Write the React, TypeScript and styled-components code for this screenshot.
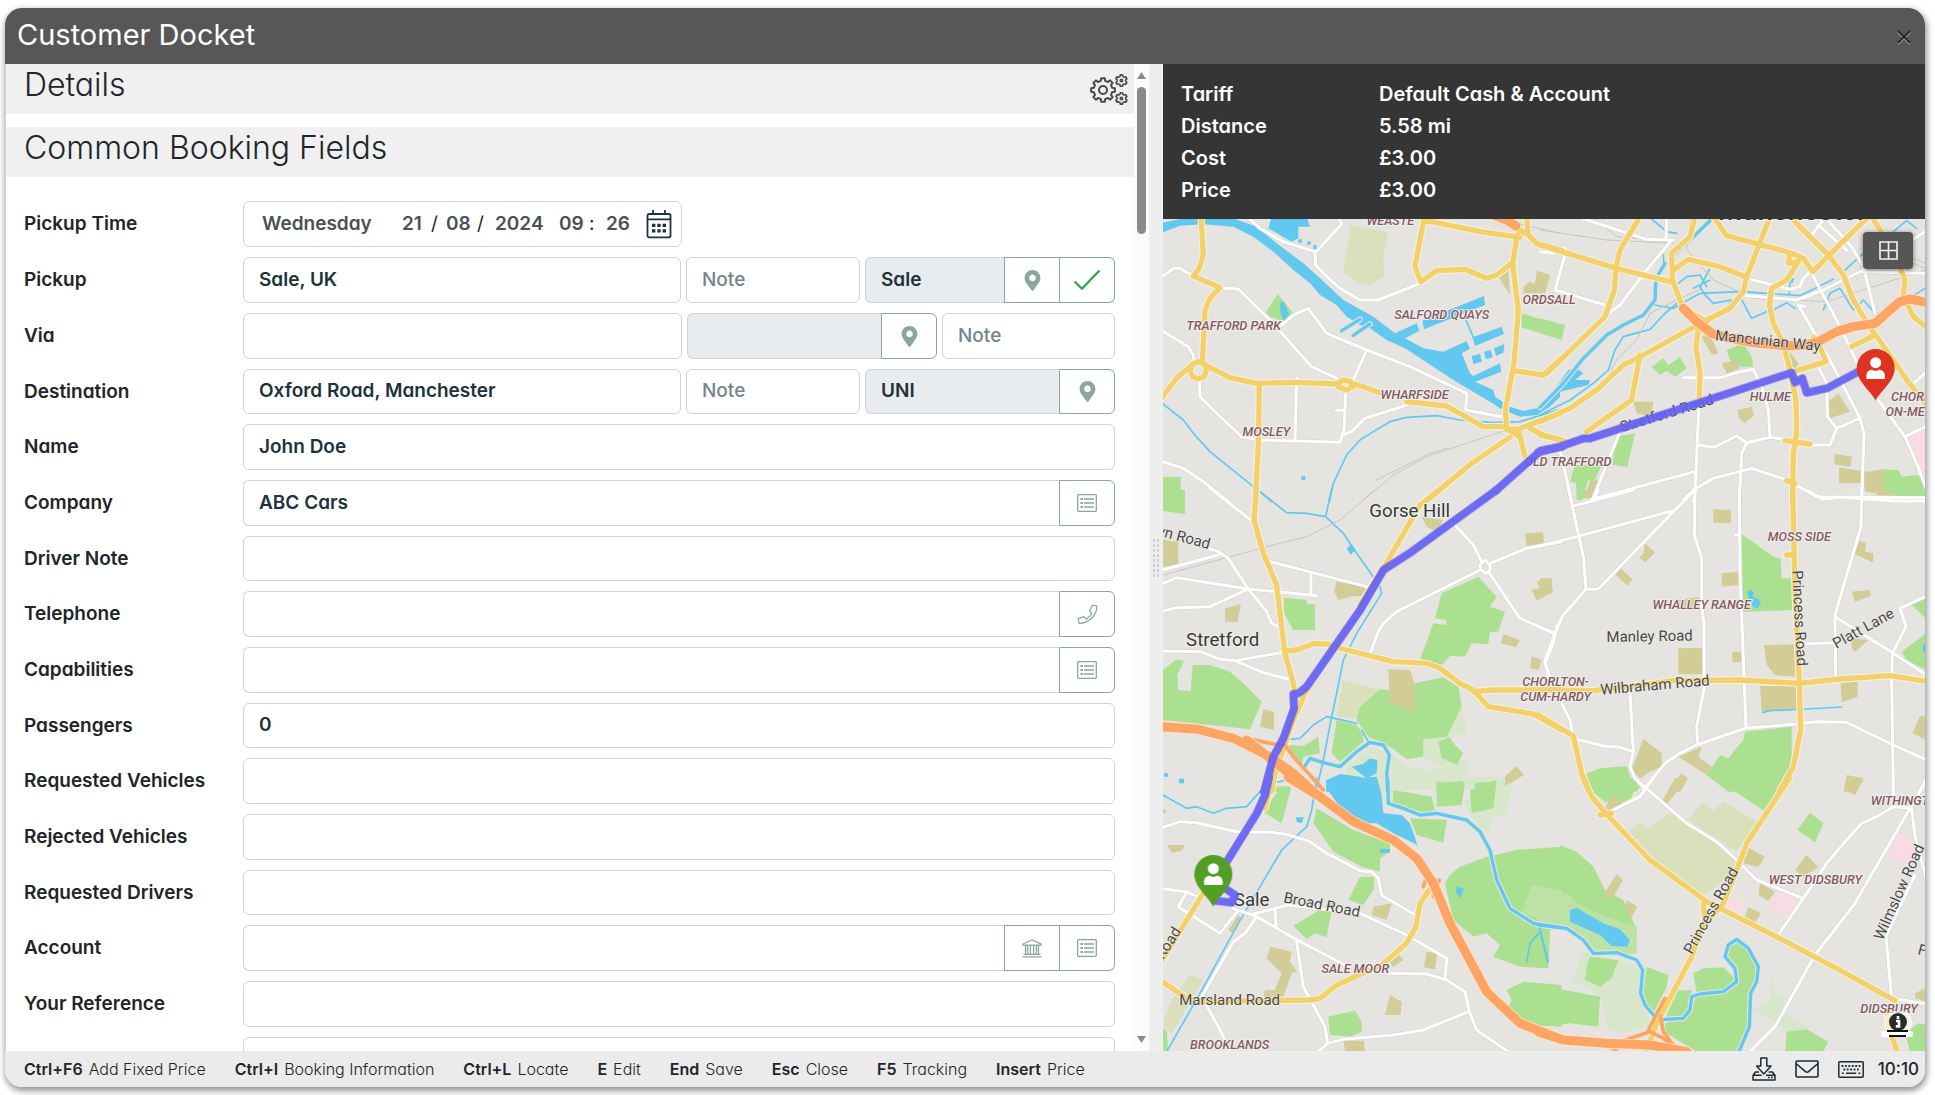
import React from "react";
import styled, { createGlobalStyle } from "styled-components";
import { FaMapMarkerAlt } from "react-icons/fa";

const FONT = `Inter, "Open Sans", "Liberation Sans", sans-serif`;

const GlobalStyle = createGlobalStyle`
  *, *::before, *::after { box-sizing: border-box; }
  body {
    margin: 0;
    background: #fff;
    color: #212529;
    font-family: ${FONT};
    font-feature-settings: "cv11";
    font-size: 19px;
  }
  input, button { font: inherit; font-feature-settings: inherit; color: inherit; }
`;

/* ---------- window frame ---------- */

const Desktop = styled.main`
  height: 100vh;
  padding: 8px 10px 8px 5px;
`;

const Window = styled.section`
  height: 100%;
  display: grid;
  grid-template-rows: 56px minmax(0, 1fr) 36px;
  border-radius: 17px;
  overflow: hidden;
  background: #fff;
  box-shadow: 1px 3px 6px 1px rgba(0, 0, 0, 0.42);
`;

const TitleBar = styled.header`
  display: flex;
  align-items: center;
  justify-content: space-between;
  padding: 0 13px 2px 12px;
  background: #575757;
  color: #fff;
`;

const Title = styled.h1`
  margin: 0;
  font-size: 29px;
  line-height: 36px;
  font-weight: 400;
`;

const CloseButton = styled.button`
  display: grid;
  place-items: center;
  width: 16px;
  height: 16px;
  margin-top: 4px;
  padding: 0;
  border: 0;
  background: none;
  color: #262626;
  filter: drop-shadow(0 1px 0 #bdbdbd);
`;

const Body = styled.div`
  display: grid;
  grid-template-columns: minmax(0, 1144fr) 14px minmax(0, 762fr);
  min-height: 0;
`;

/* ---------- form pane ---------- */

const FormPane = styled.div`
  display: grid;
  grid-template-columns: minmax(0, 1fr) 15px;
  min-height: 0;
  border-left: 1px solid #d0d0d0;
`;

const FormScroll = styled.div`
  overflow: hidden;
  min-height: 0;
`;

const Band = styled.div`
  display: flex;
  justify-content: space-between;
  align-items: flex-start;
  height: 50px;
  margin-bottom: 13px;
  padding: 0 6px 0 18px;
  background: #f0f0f0;
`;

const BandTitle = styled.h2`
  margin: 0;
  font-size: 32px;
  line-height: 42px;
  font-weight: 300;
`;

const GearButton = styled.button`
  margin-top: 9px;
  padding: 0;
  border: 0;
  background: none;
  color: #4b4b4b;
  line-height: 0;
`;

const Fields = styled.form`
  display: grid;
  gap: 10px;
  padding: 11px 19px 0 18px;
`;

const Row = styled.div`
  display: grid;
  grid-template-columns: 219px minmax(0, 1fr);
  height: 46px;
  &:nth-child(3n + 4) {
    height: 45px;
  }
`;

const Label = styled.label`
  align-self: center;
  line-height: 24px;
  font-weight: 600;
`;

const Controls = styled.div`
  display: flex;
  gap: 5px;
  min-width: 0;
`;

const Group = styled.div<{ $grow: number }>`
  display: flex;
  flex: ${(p) => p.$grow} 1 0;
  min-width: 0;
`;

const TextBox = styled.input<{ $joined?: boolean }>`
  flex: 1 1 0;
  min-width: 0;
  height: 100%;
  padding: 0 15px 2px;
  border: 1px solid #ced4da;
  border-right-width: ${(p) => (p.$joined ? "0" : "1px")};
  border-radius: ${(p) => (p.$joined ? "6px 0 0 6px" : "6px")};
  background: #fff;
  color: #1d333b;
  font-weight: 600;
  outline: none;
  &::placeholder {
    color: #75838a;
    font-weight: 500;
    opacity: 1;
  }
  &:read-only {
    background: #e9ecef;
  }
`;

const AddOn = styled.button`
  display: grid;
  place-items: center;
  flex: none;
  width: 56px;
  padding: 0;
  border: 1px solid #8ba79b;
  background: #fff;
  color: #8ba79b;
  & + & {
    width: 55px;
    border-left: 0;
  }
  &:last-child {
    border-radius: 0 6px 6px 0;
  }
`;

const DateBox = styled.div`
  display: flex;
  align-items: center;
  width: 439px;
  padding-left: 18px;
  border: 1px solid #ced4da;
  border-radius: 6px;
`;

const DatePart = styled.input<{ $w: number }>`
  width: ${(p) => p.$w}px;
  padding: 0 0 2px;
  border: 0;
  background: none;
  color: #495057;
  font-weight: 600;
  outline: none;
`;

const Separator = styled.span<{ $w: number }>`
  width: ${(p) => p.$w}px;
  padding-bottom: 2px;
`;

const CalendarButton = styled.button`
  padding: 0;
  border: 0;
  background: none;
  color: #1d333b;
  line-height: 0;
`;

const ScrollTrack = styled.div`
  display: flex;
  flex-direction: column;
  align-items: center;
  padding: 8px 0;
  background: #fcfcfc;
  color: #8a8a8a;
  line-height: 0;
`;

const ScrollThumb = styled.div`
  width: 9px;
  height: 147px;
  margin: 8px 0 auto;
  border-radius: 5px;
  background: #8a8a8a;
`;

const Splitter = styled.div`
  display: grid;
  grid-template-columns: 2px 2px;
  grid-auto-rows: 3px;
  gap: 2px;
  place-content: center;
  background: #eee;
  span {
    background: #cfcfcf;
  }
`;

/* ---------- price and map pane ---------- */

const SidePane = styled.aside`
  display: grid;
  grid-template-rows: auto minmax(0, 1fr);
  min-height: 0;
`;

const Summary = styled.dl`
  display: grid;
  grid-template-columns: 198px 1fr;
  margin: 0;
  padding: 14px 18px 13px;
  background: #353535;
  color: #fff;
  font-size: 20px;
  line-height: 32px;
  font-weight: 600;
  dd {
    margin: 0;
  }
`;

const MapArea = styled.div`
  position: relative;
  min-height: 0;
  overflow: hidden;
  background: #e5e4e0;
`;

const MapSvg = styled.svg`
  display: block;
  width: 100%;
  height: 100%;
  font-family: Roboto, "Liberation Sans", sans-serif;
  text {
    paint-order: stroke;
    stroke: #f1f0ee;
    stroke-width: 6px;
    stroke-linejoin: round;
    text-anchor: middle;
  }
  .area {
    font-size: 38px;
    font-style: italic;
    font-weight: 500;
    fill: #84595f;
  }
  .city {
    font-size: 84px;
    font-weight: 500;
    fill: #333333;
  }
  .town {
    font-size: 56px;
    fill: #383838;
  }
  .road {
    font-size: 45px;
    fill: #484848;
    stroke-width: 3px;
  }
`;

const MapButton = styled.button`
  position: absolute;
  top: 13px;
  right: 12px;
  display: grid;
  place-items: center;
  width: 50px;
  height: 37px;
  padding: 0;
  border: 0;
  border-radius: 4px;
  background: #565656;
  color: #f4f3ec;
  box-shadow: 0 1px 5px rgba(0, 0, 0, 0.5);
`;

const MapInfo = styled.button`
  position: absolute;
  right: 12px;
  bottom: 12px;
  padding: 0;
  border: 0;
  background: none;
  line-height: 0;
`;

/* ---------- status bar ---------- */

const StatusBar = styled.footer`
  display: flex;
  align-items: center;
  justify-content: space-between;
  padding: 0 6px 0 19px;
  background: #ebebeb;
  font-size: 16px;
`;

const Shortcuts = styled.div`
  display: flex;
  gap: 29px;
`;

const Shortcut = styled.button`
  display: flex;
  gap: 6px;
  padding: 0;
  border: 0;
  background: none;
  line-height: 20px;
  font-weight: 300;
  kbd {
    font: inherit;
    font-weight: 600;
  }
`;

const Tray = styled.div`
  display: flex;
  align-items: center;
  gap: 19px;
  line-height: 0;
  button {
    padding: 0;
    border: 0;
    background: none;
    line-height: 0;
  }
  time {
    font-size: 17px;
    line-height: 20px;
    font-weight: 500;
    margin-left: -5px;
  }
`;

/* ---------- icons ---------- */

function gear(cx: number, cy: number, outer: number, inner: number, teeth: number) {
  const pts: string[] = [];
  const step = (Math.PI * 2) / teeth;
  for (let i = 0; i < teeth; i++) {
    const a = i * step - Math.PI / 2;
    [
      [-0.3, inner],
      [-0.19, outer],
      [0.19, outer],
      [0.3, inner],
    ].forEach(([o, r]) => {
      pts.push(`${(cx + Math.cos(a + o * step) * r).toFixed(2)} ${(cy + Math.sin(a + o * step) * r).toFixed(2)}`);
    });
  }
  return `M${pts.join("L")}Z`;
}

const GearsIcon = () => (
  <svg width="38" height="33" viewBox="0 0 38 33" fill="none" stroke="currentColor" strokeWidth="2" strokeLinejoin="round">
    <path d={gear(13, 17, 12, 9.4, 8)} />
    <circle cx="13" cy="17" r="4" />
    <g strokeWidth="1.6">
      <path d={gear(31.4, 7.6, 5.8, 4.4, 6)} />
      <path d={gear(31.4, 25.4, 5.8, 4.4, 6)} />
      <circle cx="31.4" cy="7.6" r="1.2" />
      <circle cx="31.4" cy="25.4" r="1.2" />
    </g>
  </svg>
);

const CalendarIcon = () => (
  <svg width="26" height="30" viewBox="0 0 26 30" fill="none" stroke="currentColor" strokeWidth="1.8">
    <rect x="1.5" y="5" width="23" height="23.4" rx="1.6" />
    <path d="M1.5 10.4H24.5M7 1V5M19 1V5" />
    <path d="M6 16.3H20M6 21.8H20" strokeWidth="3.2" strokeDasharray="3.4 1.9" />
  </svg>
);

const CheckIcon = () => (
  <svg width="28" height="22" viewBox="0 0 28 22" fill="none" stroke="#28a745" strokeWidth="2.2">
    <path d="M1.5 12.5L9 19.8L26.5 1.5" />
  </svg>
);

const ListIcon = () => (
  <svg width="20" height="18" viewBox="0 0 20 18" fill="none" stroke="currentColor" strokeWidth="1.3">
    <rect x="0.7" y="0.7" width="18.6" height="16.6" rx="0.8" />
    <path d="M7 5H17M7 9H17M7 13H17" />
    <path d="M3.5 5H6M3.5 9H6M3.5 13H6" strokeWidth="2.2" />
  </svg>
);

const PhoneIcon = () => (
  <svg width="21" height="21" viewBox="-1 -1 22 22" fill="none" stroke="currentColor" strokeWidth="1.3" strokeLinejoin="round">
    <path d="M15 .3L19.8 1C20 11 11 19.4 1.2 19.2L.3 14.4L6.3 12.3L8.6 14.8C11.4 13.4 13.4 11.4 14.6 8.6L12.2 6.3Z" />
  </svg>
);

const BankIcon = () => (
  <svg width="20" height="19" viewBox="0 0 20 19" fill="none" stroke="currentColor" strokeWidth="1.3">
    <path d="M1 5L10 .9L19 5V6.2H1ZM3.5 6.5V15M5.6 6.5V15M8.4 6.5V15M11.6 6.5V15M14.4 6.5V15M16.5 6.5V15M1.6 15.4H18.4M.4 17.8H19.6" />
  </svg>
);

const PinIcon = () => <FaMapMarkerAlt size={21} />;

/* ---------- map data ---------- */

interface Sheet {
  at: [number, number];
  pale?: string[];
  moss?: string[];
  green?: string[];
  glade?: string[];
  sand?: string[];
  pink?: string[];
  water?: string[];
  river?: string[];
  stream?: string[];
  rail?: string[];
  white?: string[];
  yellow?: string[];
  slip?: string[];
  orange?: string[];
  route?: string[];
}

const SHEETS: Sheet[] = [
  {
    at: [-9, -57],
    moss: ["573,75 683,97 670,175 672,230 630,255 600,253 550,215"],
    green: [
      "353,282 400,340 375,365 312,345",
      "1085,340 1200,375 1200,418 1085,382",
      "9,832 62,830 62,870 75,880 75,900 9,900",
    ],
    sand: ["1130,212 1170,225 1155,280 1090,280 1090,260 1108,245 1125,250", "1045,210 1015,230 1050,285"],
    water: [
      "0,70 60,57 225,57 290,80 350,130 430,190 480,235 550,300 640,350 705,400 770,370 778,392 735,415 790,445 850,455 920,423 930,447 905,460 930,520 940,528 1020,490 1024,515 945,545 1000,570 1005,590 1050,620 1090,633 1130,625 1165,590 1200,545 1200,590 1170,620 1130,645 1080,650 1020,625 990,605 880,540 735,445 680,420 630,385 600,375 560,350 530,315 480,285 450,250 400,210 340,155 280,110 220,80 130,73 60,77 0,100",
      "787,362 972,288 975,315 792,388",
      "938,412 1025,380 1032,402 945,438",
      "935,468 960,462 966,485 940,492",
      "972,455 992,450 998,472 978,478",
      "1002,445 1033,432 1030,458 1008,468",
      "335,50 440,50 450,80 415,80 415,115 395,125 325,85",
      "360,308 372,305 388,345 370,362 362,340",
      "415,118 426,118 426,128 415,128",
      "442,124 452,124 452,134 442,134",
      "460,136 470,136 470,147 460,147",
      "424,829 436,829 436,840 424,840",
    ],
    river: ["545,392 600,358", "580,406 630,372"],
    stream: [
      "918,360 940,412",
      "9,612 70,660 100,700 150,755 280,860",
      "300,875 335,905",
      "508,905 520,850 560,765 600,720 640,695 690,665 740,652 830,647 900,660 1000,668 1080,665 1200,628",
    ],
    rail: ["610,900 700,825 800,770 1040,690", "650,840 810,760 860,745", "1080,72 1200,100"],
    white: [
      "262,50 300,85 370,125 465,155 467,195 490,220 540,265 600,300 655,300 780,250",
      "465,160 545,72 535,50",
      "0,235 40,205 60,205 100,228",
      "195,265 235,267 335,365 455,500 530,535",
      "360,380 400,345 445,325 500,400 620,450 750,500 920,580 917,630 1025,650",
      "620,450 580,540",
      "0,388 85,440 100,465 102,490",
      "118,540 120,590 175,645 245,710 300,720 540,727",
      "410,535 405,720",
      "557,580 552,690 540,727",
      "528,631 552,631",
      "555,703 575,695 615,655 740,615",
      "0,783 70,805 130,845 205,905",
    ],
    yellow: [
      "123,50 130,165 118,205 100,228 180,263 150,295 135,330 127,490",
      "90,510 98,530 115,536 132,530 140,510 132,492 115,485 98,492 90,510",
      "0,600 50,535 95,495",
      "135,495 210,533 290,550 405,547 530,552 550,540 572,545 578,560 560,570 535,560",
      "575,550 610,560 670,582",
      "740,605 860,618 925,655 970,680 1040,680",
      "298,555 295,740 286,905",
      "790,60 960,95 1080,112",
      "790,65 765,200 783,245 830,212 915,208 980,235 1010,225 1055,190",
      "1072,105 1058,190 1075,330 1062,490 1036,630 1040,685 1080,710",
      "1060,512 1150,525 1205,475",
      "1100,50 1105,105 1070,85",
      "1105,105 1130,130 1205,152",
      "1040,690 1080,685 1200,640",
      "795,905 935,790 1050,712",
      "1078,700 1095,770",
      "1110,685 1150,705 1205,720",
    ],
    orange: ["1000,45 1040,60 1068,78"],
    route: ["1008,871 1142,752 1205,740"],
  },
  {
    at: [1131, -57],
    green: [
      "0,355 75,375 65,420 0,400",
      "335,500 370,475 385,495 420,470 440,505 405,530 380,512 360,525",
      "560,450 610,430 635,470 640,500 605,500 570,480",
      "225,710 285,700 262,800 218,795",
      "105,795 185,795 160,850 145,840 125,900 110,900 108,850 90,845",
      "1025,808 1075,810 1085,830 1130,825 1155,840 1155,900 1060,900 1050,880 1025,870",
    ],
    sand: [
      "0,215 30,225 15,280 0,278",
      "485,410 510,402 535,460 515,465",
      "545,490 590,480 600,505 560,520",
      "745,450 775,490 770,505 750,500",
      "280,605 340,605 335,650 290,640",
      "593,630 635,620 642,645 615,670 597,655",
      "865,605 895,580 930,635 870,655",
      "885,762 937,770 930,800 882,793",
      "897,803 985,815 1028,808 1028,870 1055,875 1055,900 1015,900 1010,880 975,875 972,850 897,850",
      "150,845 175,840 155,895 130,895",
    ],
    pink: ["1100,710 1160,680 1160,870 1135,800"],
    water: ["85,510 110,505 130,520 105,540 150,540 145,555 60,575 50,560", "750,232 762,235 758,250 748,246"],
    river: ["0,622 70,550 130,475 200,405 250,375 310,345 345,300 348,235 375,190", "400,165 450,120 515,57"],
    stream: [
      "0,645 90,600 160,550 205,510 225,450 250,410 330,388 370,345 410,310",
      "345,315 400,325 480,280 600,275 650,278 780,287 880,238",
      "415,250 440,230 480,225 500,260",
      "508,208 480,262 500,290 520,310 575,300 560,325",
      "460,265 510,240",
      "370,165 372,200",
      "600,290 635,355 680,335",
      "700,330 740,308 765,325",
      "750,235 748,285",
      "850,330 870,280 900,265 940,330 970,300 1010,345",
      "910,215 970,160",
      "335,57 380,95 410,100",
      "1060,95 1100,62 1130,85",
      "1115,290 1155,265",
    ],
    rail: [
      "0,90 200,120 400,130",
      "450,57 440,150 520,240 640,295 860,305 1155,210",
      "180,70 230,110 360,120",
      "480,268 410,300 330,340 290,420 230,480 200,540",
      "1060,150 1155,190",
      "1060,165 1155,205",
    ],
    white: [
      "110,50 320,118 400,120",
      "380,50 378,115",
      "0,155 35,160 75,145 75,165 45,270 195,315",
      "200,345 240,315 320,210 395,120",
      "620,235 750,268 780,260 790,235 815,212",
      "600,285 770,300 850,270 1000,195 1155,95",
      "815,105 850,60",
      "840,80 920,150",
      "860,57 935,140 970,200 1005,340",
      "795,320 775,315 870,480",
      "815,220 900,380 985,560 1095,710 1130,790 1160,870",
      "870,480 960,655 972,700 965,905",
      "430,533 540,533 600,515 640,508 665,560 685,630 690,710",
      "478,590 465,880 460,905",
      "478,735 520,742 590,708 620,728 690,712 735,718",
      "620,728 605,760 598,905",
      "835,500 860,550 862,650 890,685 870,735 815,735",
      "890,685 960,655",
      "1095,710 1160,678",
      "1115,555 1160,515",
      "240,695 155,905",
      "155,898 465,815",
      "60,750 95,905",
      "430,900 460,870 520,835 635,805 740,840 830,890 1155,893",
      "965,215 1155,220",
    ],
    yellow: [
      "0,135 230,205 390,245",
      "300,50 240,150 228,205 223,270 195,350 20,520 0,525",
      "465,50 450,110 395,160 397,240 430,325 500,365",
      "400,210 445,178 540,200 620,232",
      "520,50 560,107 750,158 790,175 818,215 865,168 985,50",
      "690,50 620,230 610,275 570,325 500,360 310,465 250,495 170,570 90,625 0,665",
      "750,50 865,165 910,225 940,300 985,375",
      "995,50 1055,145 1095,240 1090,290 1120,350 1160,382",
      "750,160 745,190 775,185 740,240 695,265 688,315 700,370 725,420 745,490 768,600 770,700 760,760 758,905",
      "770,512 858,485 840,440 820,412",
      "985,375 1060,480 1100,540 1160,615",
      "935,440 1005,405",
      "300,465 275,600 140,695",
      "475,385 468,440 480,520 478,590",
      "0,705 80,725",
      "735,722 810,732",
      "740,842 765,850",
    ],
    orange: ["430,325 470,365 515,400 560,412 640,428 740,437 800,435 835,425 890,395 940,380 1005,370 1050,330 1080,305 1110,297 1160,307"],
    route: ["-5,757 60,740 130,715 150,715 755,518 765,547 787,535 800,578 860,565 955,515"],
  },
  {
    at: [-9, 813],
    pale: [
      "560,830 640,770 690,790 680,900 560,900",
      "690,790 740,830 800,840 900,830 920,862 1040,860 1040,880 900,900 700,900",
      "790,748 905,650 915,700 920,730 870,740 880,800 925,820 925,850 840,830 790,800",
    ],
    moss: ["548,570 660,600 590,685 530,680"],
    green: [
      "9,0 75,0 75,72 45,68 9,62",
      "372,323 440,330 440,343 465,343 465,420 400,420 372,370",
      "845,310 955,260 1010,320 990,350 1035,365 1015,425 990,425 985,462 935,460 915,500 870,497 845,525 780,508 820,400 860,405 858,390 825,385",
      "9,540 50,508 72,512 52,555 55,600 92,603 98,525 150,525 210,545 250,580 305,635 270,718 200,710 9,690",
      "765,580 850,562 895,590 905,650 860,740 790,748 790,800 740,808 690,770 625,740 590,690 600,650 660,598 690,600 765,660",
      "530,690 590,705 610,735 610,755 540,815 515,790",
      "385,765 430,768 475,740 480,790 430,800 425,830 410,820",
      "835,755 870,742 885,765 910,790 890,825 845,805",
      "830,880 910,872 910,905 830,905",
      "945,878 1000,875 1000,905 945,905",
      "345,890 390,890 390,905 345,905",
    ],
    sand: [
      "9,150 55,155 55,225 9,230",
      "530,275 625,290 620,320 580,318 535,330 522,305",
      "685,538 750,540 765,585 765,665 690,640",
      "785,80 850,90 830,125 800,110",
      "1095,130 1148,127 1152,160 1100,170",
      "1130,275 1172,262 1178,305 1130,332 1115,300 1140,295",
      "1030,432 1080,450 1068,472 1022,460",
      "1115,498 1145,510 1135,540 1110,535",
      "195,355 243,343 232,397 195,395",
      "310,658 342,665 342,720 300,710",
      "1070,828 1092,855 1035,888 1035,860",
    ],
    water: [
      "560,175 575,162 585,180 572,195",
      "498,905 500,870 540,852 600,860 660,905",
      "575,830 610,822 630,805 652,810 650,850 620,865 600,850",
      "12,850 24,850 24,860 12,860",
      "57,866 72,866 72,880 57,880",
    ],
    river: ["430,835 450,805 490,818 540,830 590,785 630,757 670,765 688,795 680,850 683,905"],
    stream: [
      "300,5 380,68 440,70 497,80 515,-5",
      "497,80 550,130 590,190 640,260",
      "660,290 665,310 590,430 550,510 530,610 515,680 490,810 468,905",
      "390,748 420,745 460,705 500,680 590,700",
      "605,720 625,755",
      "345,878 380,870",
    ],
    rail: ["9,255 340,165 440,140 540,90 645,0"],
    white: [
      "150,-5 275,92",
      "100,160 175,185 205,205 265,297 320,365 335,400 360,412",
      "0,242 175,195 178,185",
      "0,285 50,263 265,297 470,317",
      "0,366 50,353 150,350 265,297",
      "325,213 640,295",
      "453,250 453,315",
      "0,483 120,485 180,508 225,512 370,487",
      "225,512 310,548 395,570",
      "880,100 940,165 965,215",
      "990,220 1100,175 1205,155",
      "960,240 710,365 670,400 655,425 632,487",
      "960,225 975,210 990,225 990,240 977,250 962,238 960,225",
      "985,245 1080,385 1185,430 1205,385",
      "1185,430 1155,510 1165,560",
    ],
    yellow: [
      "290,-5 282,90 310,190 350,285 375,490 400,580 405,610",
      "845,-5 780,45 670,235 600,345",
      "380,483 410,480 465,460 500,462 560,480 700,515 800,520 840,535 900,580 940,600 985,650 1120,672 1205,720",
      "940,605 1000,600 1205,600",
      "440,600 400,690 345,850 335,905",
    ],
    orange: ["0,710 115,718 220,745 330,800 400,850 460,905", "260,750 400,860"],
    slip: ["260,745 345,763 375,765 400,800 490,900"],
    route: ["1008,1 755,185 670,240 600,360 440,590 415,610 400,612 402,655 370,745 340,800 312,905"],
  },
  {
    at: [1131, 813],
    green: [
      "605,132 700,200 722,205 725,265 755,265 758,360 610,365",
      "615,725 755,710 755,800 750,820 755,825 700,905 565,905 500,855 540,795 565,805 610,750",
      "140,850 180,835 260,828 270,860 300,890 290,905 150,905",
      "1115,345 1160,318 1160,388",
      "1085,485 1160,428 1160,540 1100,510",
      "115,0 140,0 130,28",
      "1055,0 1155,0 1155,28 1060,25",
    ],
    sand: [
      "520,58 573,60 573,100 520,98",
      "545,250 595,245 595,285 545,290",
      "315,160 345,188 315,217 298,203 310,190",
      "240,233 277,268 262,287 227,255",
      "0,265 35,265 38,310 0,315",
      "415,475 487,473 487,553 415,552",
      "577,485 603,485 605,517 577,517",
      "672,465 765,463 765,560 705,555 680,525",
      "660,588 770,588 770,658 665,665",
      "902,580 953,575 953,620 905,637",
      "940,190 960,152 978,160 975,185 1000,190 1000,218",
      "935,305 990,300 992,318 945,335",
      "935,445 985,450 945,485 935,475",
      "310,747 365,790 365,830 330,845 300,865 275,840",
      "415,800 485,770 475,800 515,830 500,855",
      "425,850 445,865 420,905 388,900",
      "920,855 970,865 950,905 912,905",
      "1140,678 1160,680 1160,750 1117,730",
      "410,330 485,320 480,345 415,360",
      "0,128 10,130 10,160 0,160",
    ],
    water: [
      "622,305 632,299 642,308 638,320 655,326 663,340 652,355 638,350 634,335 625,320",
      "1148,465 1160,460 1160,490 1148,485",
    ],
    stream: ["668,668 690,662 800,657 905,651"],
    white: [
      "105,47 280,0",
      "85,-5 130,200 138,298 175,297 400,65 465,0",
      "0,168 110,140 400,62",
      "175,0 160,30",
      "465,-5 463,135 485,205 485,350 492,400 493,590 470,710 473,760",
      "598,-5 600,250 618,710",
      "586,135 600,135",
      "138,298 70,375 50,410 40,460 15,520 30,560",
      "0,412 40,430",
      "800,0 850,28 900,22 1060,33 1160,33",
      "965,-5 963,110 885,375 887,560",
      "785,462 885,458",
      "885,380 1060,490 1160,555",
      "1160,318 1080,355 1098,410 1057,490 1055,560 1060,905",
      "65,640 90,690 100,745 190,768 240,772 280,785 270,610",
      "280,785 270,830 285,865 315,895",
      "310,900 375,820 420,790 470,765 615,715 770,702 830,695 920,697 1060,765 1160,810",
      "1160,865 1138,905",
    ],
    yellow: [
      "758,-5 765,300 778,580 782,720 760,830 718,905",
      "740,195 762,195",
      "0,600 160,602 270,590 400,572 600,570 778,580 900,567 1050,557 1160,574",
      "-5,675 100,738 125,850 148,905",
    ],
  },
  {
    at: [-9, 1683],
    pale: ["910,60 1060,-10 1040,100 1000,110 985,165 940,120", "560,0 700,0 700,80 665,60"],
    moss: ["90,583 130,600 35,760 9,735 30,670"],
    green: [
      "310,95 365,17 393,25 365,130",
      "470,85 580,150 690,190 690,215 660,235 660,275 605,260 520,215 460,130",
      "600,290 643,290 640,330 610,375 565,360",
      "400,437 520,365 500,472 465,460 440,477",
      "750,115 860,120 850,188 770,165",
      "700,30 815,50 825,90 790,100 700,85",
      "830,5 915,10 905,75 830,80",
      "930,30 1010,0 1000,85 935,100",
      "855,310 870,285 900,260 980,230 1070,210 1205,200 1205,450 1170,450 1165,565 1080,560 1000,530 1020,495 980,460 940,470 880,420",
      "505,710 585,692 605,725 605,755 570,770 510,765",
      "1090,605 1205,615 1205,740 1110,735 1040,690 1055,660 1040,630",
      "0,745 20,750 25,812 0,812",
      "0,80 22,95 0,105",
    ],
    glade: ["1115,315 1205,330 1205,440 1085,400"],
    sand: [
      "20,195 75,195 65,212 35,218",
      "330,500 395,515 390,545 412,575 395,580 370,650 310,650 315,630 345,630 365,580 320,535",
      "640,380 695,370 680,420 635,405",
      "715,520 730,540 700,560 680,540",
      "800,515 832,520 825,568 792,562",
      "690,645 725,665 722,705 675,705",
      "550,782 612,782 615,815 555,815",
      "235,405 242,415 215,460 205,450",
    ],
    water: [
      "498,0 650,-10 665,45 670,100 725,105 750,130 772,195 700,160 650,130 610,130 545,90 500,25",
      "890,320 912,325 900,355 888,335",
      "660,207 690,207 690,218 660,218",
      "408,112 432,112 425,130 410,125",
    ],
    river: ["683,-5 685,70 730,85 780,105 830,100 920,120 960,155 990,210 1010,300 1050,385 1120,430 1205,443"],
    stream: [
      "0,40 80,85 110,80 160,100 200,85 260,80 300,35 345,5",
      "470,-5 455,90 440,140 365,210 300,320 235,430 120,640 20,815",
      "1100,545 1110,490 1140,455 1165,545",
    ],
    white: [
      "0,145 60,125 110,128 230,155 330,157 380,163 450,185 500,220 530,235 600,272 635,275 655,295 665,345 765,405",
      "0,325 75,335 130,355",
      "80,335 55,380 180,460 235,390",
      "220,385 290,410 420,485 555,555",
      "280,402 385,375 600,400 740,465 860,535 855,600",
      "345,385 348,440",
      "290,410 255,460 220,485 125,650 180,750 210,815",
      "410,485 430,620 495,740 503,790 475,815",
      "503,790 550,778 700,765 790,750 925,695",
      "680,580 800,582 860,600 915,635 928,695 950,750 1045,815",
    ],
    yellow: [
      "337,-5 315,85",
      "130,340 0,550",
      "0,600 80,655 130,665 450,660 480,655 530,615 665,555 740,490 768,440 780,370 800,340 830,305",
    ],
    orange: ["385,-8 480,50 580,125 700,180 770,235 820,310 870,430 980,635 1080,730 1205,778"],
    slip: ["790,320 800,290", "820,350 838,300"],
    route: ["327,-8 315,45 290,100 200,245", "190,322 225,345 215,368 165,362"],
  },
  {
    at: [1131, 1683],
    pale: ["130,515 220,540 300,560 330,740 240,760 200,740 180,650 95,600", "640,685 690,660 690,590 710,640 800,660 740,650 720,690 810,745 740,755"],
    moss: [
      "265,155 300,125 325,145 385,100 440,120 585,240 580,275 490,350 330,235",
      "445,120 485,68 520,92 550,65 650,125 590,215",
    ],
    green: [
      "-5,215 40,212 65,197 110,215 160,260 195,330 250,360 290,450 285,520 180,525 150,515 130,470 -5,425",
      "525,-5 740,-5 672,92",
      "140,-5 290,-5 275,55 240,70 195,65 150,30",
      "810,98 850,130 825,187 772,150",
      "150,530 235,540 215,595 180,620 135,600 140,560",
      "-5,615 180,650 175,740 90,730 -5,740",
      "320,560 385,585 380,620 340,700 308,650",
      "460,580 490,565 550,562 590,600 560,640 470,640",
      "565,495 590,478 640,520 655,590 632,640 625,740 595,815 470,815 380,760 375,730 440,715 470,645 560,640 590,600 580,560 555,530",
      "412,632 455,630 450,690 430,712 375,715",
      "740,755 800,748 865,785 850,815 735,815",
      "1095,760 1135,730 1160,735 1160,815 1110,815",
      "0,450 30,450 22,545 0,545",
    ],
    glade: ["-5,325 90,345 110,370 160,395 250,430 290,440 290,520 180,525 150,515 100,450 -5,430"],
    sand: [
      "405,-5 440,-5 380,75 365,65",
      "190,90 220,45 250,70 200,95",
      "230,282 248,300 215,360 190,345",
      "260,360 292,380 275,412 255,390",
      "620,200 675,230 655,262 610,250",
      "765,270 800,225 835,262 790,290",
      "660,310 705,335 685,362 655,345",
      "625,382 662,400 645,428 612,415",
      "920,-5 970,0 945,45 912,30",
      "1125,640 1160,622 1160,665 1125,655",
    ],
    pink: ["1075,155 1125,180 1120,260 1040,225", "710,335 775,355 740,412 685,378", "570,355 612,370 600,402 555,385"],
    water: ["90,390 110,383 190,430 240,448 270,480 262,500 215,498 180,465 90,425"],
    river: [
      "-5,435 80,445 130,480 160,520 230,518 290,540 308,570 302,640 315,675 340,705",
      "372,718 430,715 450,690 455,650 480,642 550,635 590,605 585,565 555,530 565,495 590,478 625,505 655,560 650,605 632,640 628,740 597,815",
    ],
    stream: ["0,445 22,545"],
    white: [
      "285,-5 440,130 530,185 590,240 650,300 790,355 715,465",
      "340,-5 300,50 210,95",
      "1160,0 1110,85 945,370 825,525 705,740 630,815",
      "1060,-5 1060,80 1010,110 965,130 920,180 860,250 790,355",
      "1110,85 1060,80",
      "1115,85 1125,170 1160,300",
      "1125,285 1070,400 1038,470 1055,655 1160,672",
    ],
    yellow: [
      "128,-5 155,50 200,103 330,240 500,365 530,380 700,465 890,565 1065,662",
      "180,105 215,100",
      "748,-5 620,190 590,270 550,370 485,440 455,530 350,730 318,815",
      "490,375 495,430",
      "1045,680 1045,740 1072,815",
    ],
    orange: ["-5,756 70,780 200,790 330,795 440,815"],
    slip: ["240,785 330,755 370,775 400,800", "362,710 370,755 400,795", "375,655 325,750", "200,795 230,812"],
  },
];

const line = (s: string) => "M" + s.replace(/ /g, "L");

interface LayerProps {
  pick: keyof Omit<Sheet, "at">;
  fill?: string;
  stroke?: string;
  width?: number;
  opacity?: number;
}

/** One thematic layer of the map, drawn across every sheet. */
const Layer = ({ pick, fill = "none", stroke, width, opacity }: LayerProps) => (
  <g fill={fill} stroke={stroke} strokeWidth={width} opacity={opacity} strokeLinecap="round" strokeLinejoin="round">
    {SHEETS.map((sheet, i) => (
      <path
        key={i}
        transform={`translate(${sheet.at[0]} ${sheet.at[1]})`}
        d={(sheet[pick] ?? []).map((s) => line(s) + (fill === "none" ? "" : "Z")).join("")}
      />
    ))}
  </g>
);

type MapLabel = [kind: "area" | "city" | "town" | "road", text: string, x: number, y: number, turn?: number];

const LABELS: MapLabel[] = [
  ["area", "WEASTE", 682, 18],
  ["area", "TRAFFORD PARK", 212, 333],
  ["area", "SALFORD QUAYS", 836, 300],
  ["area", "ORDSALL", 1158, 254],
  ["area", "WHARFSIDE", 755, 541],
  ["area", "MOSLEY", 310, 652],
  ["area", "OLD TRAFFORD", 1215, 741],
  ["area", "HULME", 1822, 547],
  ["area", "CHORLTON-", 2284, 547],
  ["area", "ON-MEDLOCK", 2284, 592],
  ["area", "MOSS SIDE", 1909, 967],
  ["area", "WHALLEY RANGE", 1616, 1169],
  ["area", "CHORLTON-", 1178, 1401],
  ["area", "CUM-HARDY", 1178, 1446],
  ["area", "SALE MOOR", 577, 2262],
  ["area", "BROOKLANDS", 200, 2490],
  ["area", "WEST DIDSBURY", 1957, 1994],
  ["area", "WITHINGTON", 2236, 1757],
  ["area", "DIDSBURY", 2178, 2381],
  ["town", "Gorse Hill", 740, 893],
  ["town", "Stretford", 179, 1281],
  ["town", "Sale", 266, 2061],
  ["city", "Manchester", 1888, 4],
  ["road", "Mancunian Way", 1813, 380, 6],
  ["road", "Stretford Road", 1515, 597, -17],
  ["road", "Sevn Road", 35, 963, 15],
  ["road", "Manley Road", 1460, 1267, -1],
  ["road", "Wilbraham Road", 1477, 1413, -5],
  ["road", "Princess Road", 1895, 1198, 87],
  ["road", "Platt Lane", 2108, 1241, -29],
  ["road", "Princess Road", 1657, 2082, -61],
  ["road", "Wilmslow Road", 2222, 2025, -66],
  ["road", "Broad Road", 474, 2072, 11],
  ["road", "Marsland Road", 200, 2359],
  ["road", "Road", 28, 2180, -58],
  ["road", "F", 2274, 2208, 15],
];

const MapPin = ({ x, y, color }: { x: number; y: number; color: string }) => (
  <g transform={`translate(${x} ${y})`}>
    <path d="M0 98C-14 68 -57 42 -57 0A57 57 0 0 1 57 0C57 42 14 68 0 98Z" fill={color} />
    <circle cx="0" cy="-16" r="16.5" fill="#fff" />
    <path d="M-28 31V24C-28 10 -18 5 -10 5Q0 12 10 5C18 5 28 10 28 24V31Q28 33 24 33H-24Q-28 33 -28 31Z" fill="#fff" />
  </g>
);

const RouteMap = () => (
  <MapSvg viewBox="0 0 2286 2496" preserveAspectRatio="xMidYMid slice" role="img" aria-label="Route from Sale to Oxford Road">
    <Layer pick="pale" fill="#d8e6cb" />
    <Layer pick="moss" fill="#d9e0bb" />
    <Layer pick="green" fill="#abe091" />
    <Layer pick="glade" fill="#bde2a8" />
    <Layer pick="sand" fill="#d2cc96" />
    <Layer pick="pink" fill="#f9dbe4" />
    <Layer pick="water" fill="#62c8f0" />
    <Layer pick="river" stroke="#e0e4dc" width={17} />
    <Layer pick="river" stroke="#62c8f0" width={10} />
    <Layer pick="stream" stroke="#62c8f0" width={5} />
    <Layer pick="rail" stroke="#c5c5c2" width={3} />
    <Layer pick="white" stroke="#d3d2ce" width={12} />
    <Layer pick="white" stroke="#ffffff" width={9} />
    <Layer pick="yellow" stroke="#f8f2dc" width={22} />
    <Layer pick="yellow" stroke="#f2d06b" width={16} />
    <Layer pick="slip" stroke="#ffa563" width={11} />
    <Layer pick="orange" stroke="#ffe2cb" width={32} />
    <Layer pick="orange" stroke="#ffa563" width={27} />
    {LABELS.map(([kind, text, x, y, turn], i) => (
      <text key={i} className={kind} transform={`translate(${x} ${y}) rotate(${turn ?? 0})`}>
        {text}
      </text>
    ))}
    <Layer pick="route" stroke="#6560f2" width={24} opacity={0.92} />
    <MapPin x={2138} y={447} color="#de3322" />
    <MapPin x={151} y={1965} color="#539f26" />
  </MapSvg>
);

/* ---------- fields ---------- */

type AddOnKind = "pin" | "check" | "list" | "phone" | "bank";

const ADD_ONS: Record<AddOnKind, [string, React.FC]> = {
  pin: ["Locate on map", PinIcon],
  check: ["Address confirmed", CheckIcon],
  list: ["Choose from list", ListIcon],
  phone: ["Call", PhoneIcon],
  bank: ["Account details", BankIcon],
};

interface Part {
  grow: number;
  value?: string;
  note?: boolean;
  zone?: boolean;
  addOns?: AddOnKind[];
}

const FIELDS: { label: string; parts: Part[] }[] = [
  {
    label: "Pickup",
    parts: [
      { grow: 438, value: "Sale, UK" },
      { grow: 174, note: true },
      { grow: 250, value: "Sale", zone: true, addOns: ["pin", "check"] },
    ],
  },
  { label: "Via", parts: [{ grow: 439 }, { grow: 250, zone: true, addOns: ["pin"] }, { grow: 173, note: true }] },
  {
    label: "Destination",
    parts: [
      { grow: 438, value: "Oxford Road, Manchester" },
      { grow: 174, note: true },
      { grow: 250, value: "UNI", zone: true, addOns: ["pin"] },
    ],
  },
  { label: "Name", parts: [{ grow: 1, value: "John Doe" }] },
  { label: "Company", parts: [{ grow: 1, value: "ABC Cars", addOns: ["list"] }] },
  { label: "Driver Note", parts: [{ grow: 1 }] },
  { label: "Telephone", parts: [{ grow: 1, addOns: ["phone"] }] },
  { label: "Capabilities", parts: [{ grow: 1, addOns: ["list"] }] },
  { label: "Passengers", parts: [{ grow: 1, value: "0" }] },
  { label: "Requested Vehicles", parts: [{ grow: 1 }] },
  { label: "Rejected Vehicles", parts: [{ grow: 1 }] },
  { label: "Requested Drivers", parts: [{ grow: 1 }] },
  { label: "Account", parts: [{ grow: 1, addOns: ["bank", "list"] }] },
  { label: "Your Reference", parts: [{ grow: 1 }] },
  { label: "Payment Method", parts: [{ grow: 1 }] },
];

const FieldRow = ({ label, parts }: { label: string; parts: Part[] }) => {
  const id = label.toLowerCase().replace(/ /g, "-");
  return (
    <Row>
      <Label htmlFor={id}>{label}</Label>
      <Controls>
        {parts.map((part, i) => (
          <Group key={i} $grow={part.grow}>
            <TextBox
              id={i === 0 ? id : undefined}
              aria-label={i === 0 ? undefined : `${label} ${part.note ? "note" : "zone"}`}
              defaultValue={part.value}
              placeholder={part.note ? "Note" : undefined}
              readOnly={part.zone}
              $joined={Boolean(part.addOns)}
            />
            {part.addOns?.map((kind) => {
              const [name, Icon] = ADD_ONS[kind];
              return (
                <AddOn key={kind} type="button" aria-label={name}>
                  <Icon />
                </AddOn>
              );
            })}
          </Group>
        ))}
      </Controls>
    </Row>
  );
};

const PickupTimeRow = () => (
  <Row>
    <Label htmlFor="pickup-day">Pickup Time</Label>
    <DateBox>
      <DatePart $w={140} aria-label="Weekday" defaultValue="Wednesday" />
      <DatePart $w={29} id="pickup-day" defaultValue="21" />
      <Separator $w={15}>/</Separator>
      <DatePart $w={31} aria-label="Month" defaultValue="08" />
      <Separator $w={18}>/</Separator>
      <DatePart $w={64} aria-label="Year" defaultValue="2024" />
      <DatePart $w={30} aria-label="Hour" defaultValue="09" />
      <Separator $w={17}>:</Separator>
      <DatePart $w={40} aria-label="Minute" defaultValue="26" />
      <CalendarButton type="button" aria-label="Open calendar">
        <CalendarIcon />
      </CalendarButton>
    </DateBox>
  </Row>
);

const SUMMARY = [
  ["Tariff", "Default Cash & Account"],
  ["Distance", "5.58 mi"],
  ["Cost", "£3.00"],
  ["Price", "£3.00"],
];

const SHORTCUTS = [
  ["Ctrl+F6", "Add Fixed Price"],
  ["Ctrl+I", "Booking Information"],
  ["Ctrl+L", "Locate"],
  ["E", "Edit"],
  ["End", "Save"],
  ["Esc", "Close"],
  ["F5", "Tracking"],
  ["Insert", "Price"],
];

export default function App() {
  return (
    <Desktop>
      <GlobalStyle />
      <Window>
        <TitleBar>
          <Title>Customer Docket</Title>
          <CloseButton aria-label="Close">
            <svg width="14" height="14" viewBox="0 0 14 14" stroke="currentColor" strokeWidth="2">
              <path d="M1 1L13 13M13 1L1 13" />
            </svg>
          </CloseButton>
        </TitleBar>

        <Body>
          <FormPane>
            <FormScroll>
              <Band>
                <BandTitle>Details</BandTitle>
                <GearButton aria-label="Form settings">
                  <GearsIcon />
                </GearButton>
              </Band>
              <Band>
                <BandTitle>Common Booking Fields</BandTitle>
              </Band>
              <Fields>
                <PickupTimeRow />
                {FIELDS.map((f) => (
                  <FieldRow key={f.label} {...f} />
                ))}
              </Fields>
            </FormScroll>
            <ScrollTrack>
              <svg width="9" height="7" viewBox="0 0 9 7" fill="currentColor">
                <path d="M4.5 0L9 7H0Z" />
              </svg>
              <ScrollThumb />
              <svg width="9" height="7" viewBox="0 0 9 7" fill="currentColor">
                <path d="M0 0H9L4.5 7Z" />
              </svg>
            </ScrollTrack>
          </FormPane>

          <Splitter>
            {Array.from({ length: 16 }, (_, i) => (
              <span key={i} />
            ))}
          </Splitter>

          <SidePane>
            <Summary>
              {SUMMARY.map(([term, value]) => (
                <React.Fragment key={term}>
                  <dt>{term}</dt>
                  <dd>{value}</dd>
                </React.Fragment>
              ))}
            </Summary>
            <MapArea>
              <RouteMap />
              <MapButton aria-label="Map layout">
                <svg width="19" height="19" viewBox="0 0 19 19" fill="none" stroke="currentColor" strokeWidth="1.6">
                  <path d="M1 1H18V18H1ZM9.5 1V18M1 9.5H18" />
                </svg>
              </MapButton>
              <MapInfo aria-label="Map attribution">
                <svg width="32" height="28" viewBox="0 0 32 28">
                  <circle cx="17" cy="12" r="14" fill="#fff" opacity="0.6" />
                  <rect y="20" width="32" height="6" rx="2" fill="#fff" />
                  <circle cx="17" cy="11" r="9" fill="#2b2b2b" />
                  <path d="M17 5V8M15 10H18V15M14.8 15.4H19.4" stroke="#fff" strokeWidth="2.6" fill="none" />
                  <path d="M6 20H27M8 25H25" stroke="#111" strokeWidth="2" />
                </svg>
              </MapInfo>
            </MapArea>
          </SidePane>
        </Body>

        <StatusBar>
          <Shortcuts>
            {SHORTCUTS.map(([key, action]) => (
              <Shortcut key={key}>
                <kbd>{key}</kbd>
                <span>{action}</span>
              </Shortcut>
            ))}
          </Shortcuts>
          <Tray>
            <button aria-label="Downloads">
              <svg width="24" height="24" viewBox="0 0 24 24" fill="none" stroke="#1f2a33" strokeWidth="1.5" strokeLinejoin="round">
                <path d="M8.8 1H14.8V9H19L11.8 17L4.6 9H8.8ZM7 15H3.5L1 18.5V23H23V18.5L20.5 15H16.6M1.4 18.3H9.6M14 18.3H22.6" />
                <path d="M16 20.6H17.8M19 20.6H20.8" />
              </svg>
            </button>
            <button aria-label="Messages">
              <svg width="24" height="18" viewBox="0 0 24 18" fill="none" stroke="#1f2a33" strokeWidth="1.6">
                <rect x="1" y="1" width="22" height="16" rx="1" />
                <path d="M1 3.5L10.5 11.6Q12 12.8 13.5 11.6L23 3.5" />
              </svg>
            </button>
            <button aria-label="Keyboard">
              <svg width="26" height="17" viewBox="0 0 26 17" fill="none" stroke="#1f2a33" strokeWidth="1.5">
                <rect x="0.8" y="0.8" width="24.4" height="15.4" rx="1" />
                <path d="M3.6 5H22.6M5.4 8.5H21" strokeDasharray="1.8 1.6" strokeWidth="2" />
                <path d="M3.8 12.3H5.8M8 12.3H18.2M20.4 12.3H22.4" />
              </svg>
            </button>
            <time>10:10</time>
          </Tray>
        </StatusBar>
      </Window>
    </Desktop>
  );
}
